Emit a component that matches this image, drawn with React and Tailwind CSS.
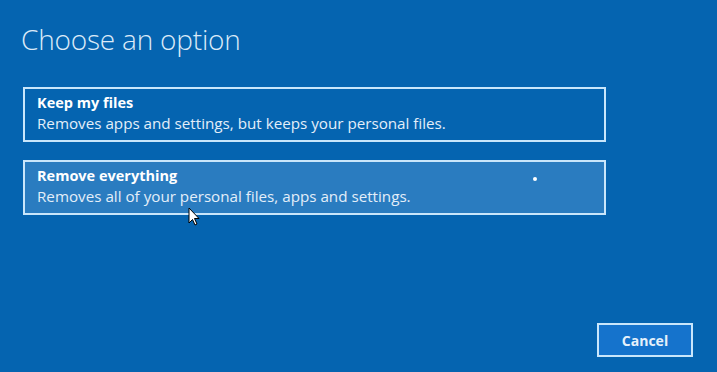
export default function App() {
  const font = { fontFamily: '"Open Sans", "Noto Sans", sans-serif' };
  return (
    <div className="relative w-[717px] h-[372px] bg-[#0564b0] overflow-hidden text-[#e8f1fa]" style={font}>
      <div className="pl-[21px] pt-[20px]">
        <h1 className="text-[28px] leading-[38px] font-light text-[#dbeaf8] tracking-[-0.2px]">Choose an option</h1>
      </div>
      <div className="flex flex-col gap-[18px] pl-[23px] pt-[29px] w-[606px]">
        <div className="h-[55px] border-2 border-[#c9e6fb] pl-[12px] pt-[3px]">
          <div className="text-[14.5px] leading-[21px] font-bold text-white">Keep my files</div>
          <div className="text-[15.2px] leading-[21px] text-[#e3eef9]">Removes apps and settings, but keeps your personal files.</div>
        </div>
        <div className="h-[55px] border-2 border-[#c9e6fb] bg-[#2a7cc0] pl-[12px] pt-[3px]">
          <div className="text-[14.5px] leading-[21px] font-bold text-white">Remove everything</div>
          <div className="text-[15.2px] leading-[21px] text-[#e3eef9]">Removes all of your personal files, apps and settings.</div>
        </div>
      </div>
      <div className="absolute left-[597px] top-[323px] w-[96px] h-[34px] border-2 border-[#c9e6fb] bg-[#1573cc] flex items-center justify-center">
        <span className="text-[14px] font-bold text-[#e6f1fb]">Cancel</span>
      </div>
      <div className="absolute left-[533px] top-[177px] w-[4px] h-[4px] rounded-full bg-white" />
      <svg className="absolute left-[188px] top-[207px]" width="13" height="20" viewBox="0 0 13 20">
        <path d="M1 1 L1 16 L4.5 12.5 L7 18 L9 17 L6.5 11.5 L11 11.5 Z" fill="white" stroke="black" strokeWidth="1" strokeLinejoin="round" />
      </svg>
    </div>
  );
}
